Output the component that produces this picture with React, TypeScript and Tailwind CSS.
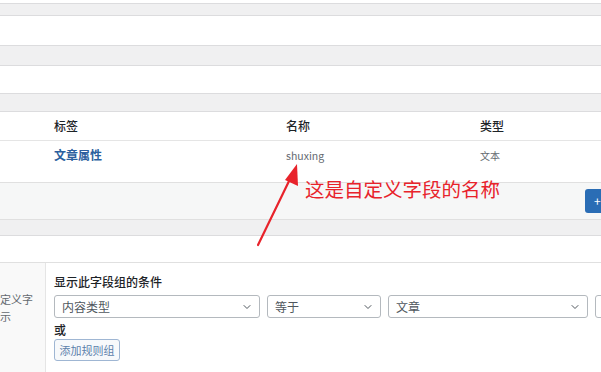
import { ChevronDown } from 'lucide-react';

const font = { fontFamily: '"Noto Sans CJK SC", "Noto Sans", sans-serif' };

function Select({ label, width }: { label: string; width: string }) {
  return (
    <div className={`flex h-[23px] shrink-0 items-center justify-between rounded-[3px] border border-[#b4b9be] bg-white pl-[7px] pr-[6px] text-[12px] text-[#50575e] ${width}`}>
      <span>{label}</span>
      <ChevronDown size={12} strokeWidth={2} className="text-[#50575e]" />
    </div>
  );
}

export default function App() {
  return (
    <div className="relative h-[372px] w-[601px] overflow-hidden bg-white" style={font}>
      {/* stacked empty postboxes */}
      <div className="h-[3px] bg-white" />
      <div className="h-[13px] border-y border-[#dcdcde] bg-[#f0f0f1]" />
      <div className="h-[29px] bg-white" />
      <div className="h-[21px] border-y border-[#dcdcde] bg-[#f0f0f1]" />
      <div className="h-[27px] bg-white" />
      <div className="h-[19px] border-y border-[#dcdcde] bg-[#f0f0f1]" />

      {/* fields table */}
      <div className="grid h-[29px] grid-cols-[232px_194px_1fr] items-center border-b border-[#e5e5e5] pl-[54px] text-[12px] font-medium text-[#1d2327]">
        <span>标签</span>
        <span>名称</span>
        <span>类型</span>
      </div>
      <div className="grid h-[41px] grid-cols-[232px_194px_1fr] items-start pl-[54px] pt-[5px]">
        <span className="text-[12px] font-bold text-[#2b5f9e]">文章属性</span>
        <span className="pt-[2px] text-[10.5px] text-[#646970]">shuxing</span>
        <span className="pt-[2px] text-[10px] text-[#646970]">文本</span>
      </div>
      <div className="flex h-[38px] items-center justify-end border-y border-[#e0e0e0] bg-[#f6f7f7]">
        <div className="mr-[-10px] flex h-[24px] w-[26px] items-center rounded-[3px] bg-[#2a6db5] pl-[9px] text-[12px] text-white">+</div>
      </div>
      <div className="h-[16px] border-b border-[#dcdcde] bg-[#f0f0f1]" />
      <div className="h-[27px] border-b border-[#e0e0e0] bg-white" />

      {/* location rules */}
      <div className="flex h-[110px]">
        <div className="w-[46px] shrink-0 border-r border-[#e5e5e5] bg-[#f9f9f9] pt-[28px] text-[11px] leading-[17px] text-[#646970]">
          <div>定义字</div>
          <div>示</div>
        </div>
        <div className="flex-1 pl-[8px] pt-[11px]">
          <div className="text-[12px] font-medium leading-[16px] text-[#1d2327]">显示此字段组的条件</div>
          <div className="mt-[5px] flex gap-[7px]">
            <Select label="内容类型" width="w-[206px]" />
            <Select label="等于" width="w-[114px]" />
            <Select label="文章" width="w-[200px]" />
            <div className="h-[23px] w-[30px] shrink-0 rounded-[3px] border border-[#b4b9be]" />
          </div>
          <div className="mt-[4px] text-[12px] font-medium leading-[16px] text-[#1d2327]">或</div>
          <div className="mt-[1px] flex h-[22px] w-[66px] items-center justify-center rounded-[3px] border border-[#9fb6d3] bg-[#f7f9fb] text-[11px] text-[#5b7fab]">
            添加规则组
          </div>
        </div>
      </div>

      {/* annotation */}
      <div className="absolute left-[305px] top-[176px] text-[19.5px] leading-[26px] text-[#e8232b]">这是自定义字段的名称</div>
      <svg className="absolute left-0 top-0" width="601" height="372" viewBox="0 0 601 372">
        <line x1="258" y1="245" x2="291" y2="177" stroke="#e8232b" strokeWidth="2.2" strokeLinecap="round" />
        <polygon points="297,164 298,186 285,180" fill="#e8232b" />
      </svg>
    </div>
  );
}
